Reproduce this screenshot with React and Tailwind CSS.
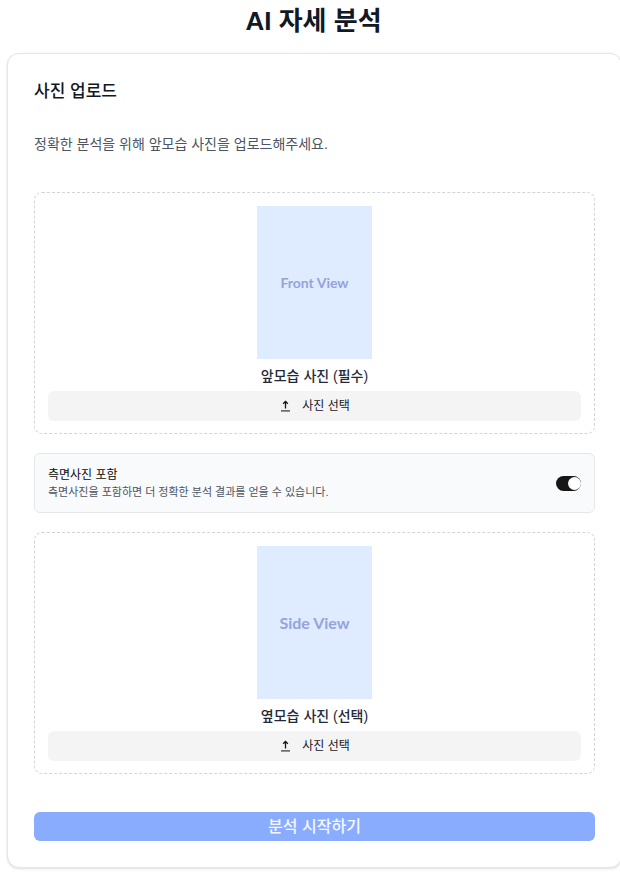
import { useState } from 'react';

function UploadIcon() {
  return (
    <svg aria-hidden="true" viewBox="0 0 13 13" className="h-[13px] w-[13px] shrink-0" fill="none" stroke="currentColor">
      <path d="M6.5 8.5V1.5" strokeWidth="1.3" />
      <path d="M4.2 3.8 6.5 1.5l2.3 2.3" strokeWidth="1.4" />
      <path d="M2 10.9h9" strokeWidth="1.3" strokeOpacity="0.8" />
    </svg>
  );
}

function PhotoBox({ placeholder, label }) {
  return (
    <section className="flex flex-col items-center rounded-lg border border-dashed border-[#d1d5db] px-[13px] pt-[13px] pb-3">
      <div className="flex h-[153px] w-[115px] items-center justify-center bg-[#dfebfe] font-['Lato',sans-serif] leading-5 font-bold text-[#94a3db]">
        {placeholder}
      </div>
      <h3 className="mt-[7px] text-[14px] leading-5 font-medium text-[#1f2937]">{label}</h3>
      <button
        type="button"
        className="mt-[5px] flex h-[30px] w-full items-center justify-center gap-[10px] rounded-md bg-[#f4f4f4] text-[12px] text-[#171717]"
      >
        <UploadIcon />
        사진 선택
      </button>
    </section>
  );
}

export default function App() {
  const [includeSide, setIncludeSide] = useState(true);

  return (
    <main className="overflow-hidden bg-white pb-1 pl-[7px] font-['Liberation_Sans','Noto_Sans_CJK_KR',sans-serif]">
      <h1 className="text-center text-[26px] leading-[42px] font-bold text-[#111827]">AI 자세 분석</h1>
      <div className="mt-[11px] -mr-[2px] rounded-xl border border-[#e5e5e5] bg-white p-[26px] shadow-sm">
        <h2 className="text-[17px] leading-6 font-medium text-[#111827]">사진 업로드</h2>
        <p className="mt-[30px] text-[14px] leading-5 text-[#4b5563]">
          정확한 분석을 위해 앞모습 사진을 업로드해주세요.
        </p>
        <div className="mt-[38px] flex flex-col gap-[19px]">
          <PhotoBox placeholder={<span className="text-[14px]">Front View</span>} label="앞모습 사진 (필수)" />
          <div className="flex h-[60px] items-center justify-between rounded-md border border-[#e5e7eb] bg-[#f9fafb] px-[13px]">
            <div>
              <label htmlFor="include-side" className="block text-[12px] leading-[18px] text-[#0a0a0a]">
                측면사진 포함
              </label>
              <p className="text-[11px] leading-4 text-[#4b5563]">
                측면사진을 포함하면 더 정확한 분석 결과를 얻을 수 있습니다.
              </p>
            </div>
            <input
              id="include-side"
              type="checkbox"
              role="switch"
              checked={includeSide}
              onChange={(event) => setIncludeSide(event.target.checked)}
              className="flex h-[15px] w-[25px] appearance-none items-center rounded-full bg-[#d4d4d4] before:block before:h-[13px] before:w-[13px] before:rounded-full before:bg-white checked:justify-end checked:bg-[#171717]"
            />
          </div>
          <PhotoBox placeholder={<span className="text-[16px]">Side View</span>} label="옆모습 사진 (선택)" />
        </div>
        <button
          type="button"
          className="mt-[38px] flex h-[29px] w-full items-center justify-center rounded-md bg-[#8aacff] text-[16px] font-medium text-[#f5f8ff]"
        >
          분석 시작하기
        </button>
      </div>
    </main>
  );
}
